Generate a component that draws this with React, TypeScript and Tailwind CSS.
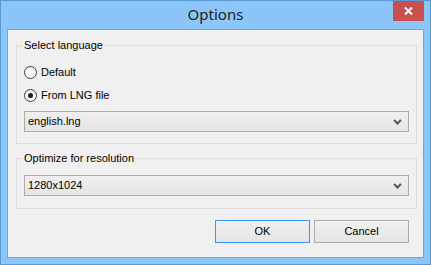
import { useState } from "react";

const body = "font-['Liberation_Sans',Arial,sans-serif] text-[11px] leading-[13px] text-black";

function Chevron() {
  return (
    <svg width="9" height="6" viewBox="0 0 9 6" className="shrink-0">
      <path d="M1 1 L4.5 4.5 L8 1" fill="none" stroke="#555" strokeWidth="2" />
    </svg>
  );
}

function Combo({ value }: { value: string }) {
  return (
    <div className="flex h-[21px] items-center justify-between border border-[#acacac] bg-gradient-to-b from-[#f0f0f0] to-[#e5e5e5] pl-[3px] pr-[6px]">
      <span>{value}</span>
      <Chevron />
    </div>
  );
}

function Radio({
  label,
  checked,
  onSelect,
}: {
  label: string;
  checked: boolean;
  onSelect: () => void;
}) {
  return (
    <button
      type="button"
      onClick={onSelect}
      className="flex h-[16px] items-center gap-[4px] text-left"
    >
      <span className="flex h-[13px] w-[13px] items-center justify-center rounded-full border border-[#3c3c3c] bg-gradient-to-b from-[#f4f4f4] to-white">
        {checked && (
          <span className="h-[5px] w-[5px] rounded-full bg-[#1c1c1c]" />
        )}
      </span>
      <span>{label}</span>
    </button>
  );
}

function Button({ label, focused }: { label: string; focused?: boolean }) {
  return (
    <button
      type="button"
      className={
        focused
          ? "flex h-[23px] w-[95px] items-center justify-center border border-[#3399ff] bg-gradient-to-b from-[#f0f0f0] to-[#e5e5e5]"
          : "flex h-[23px] w-[95px] items-center justify-center border border-[#acacac] bg-gradient-to-b from-[#f0f0f0] to-[#e5e5e5]"
      }
    >
      {label}
    </button>
  );
}

export default function App() {
  const [lang, setLang] = useState<"default" | "lng">("lng");

  return (
    <div className="flex h-[265px] w-[431px] flex-col border border-[#5b9bd5] bg-[#8cc6f8]">
      <div className="grid h-[28px] shrink-0 grid-cols-[1fr_auto_1fr]">
        <div />
        <div className="flex items-center pb-[1px] font-['Noto_Sans',sans-serif] text-[15px] text-[#222]">
          Options
        </div>
        <div className="flex justify-end">
          <div className="mr-[6px] flex h-[20px] w-[31px] items-center justify-center bg-[#c75050]">
            <svg width="9" height="8" viewBox="0 0 9 8">
              <path d="M1 0.5 L8 7.5 M8 0.5 L1 7.5" stroke="white" strokeWidth="2" />
            </svg>
          </div>
        </div>
      </div>

      <div className="mx-[6px] mb-[6px] flex flex-1 flex-col border border-[#6fa6db] bg-[#f0f0f0] pl-[8px] pr-[6px] pt-[9px]">
        <div className={body}>
          <fieldset className="border border-[#dcdcdc] px-[7px] pb-[11px] pt-[12px]">
            <legend className="-ml-[1px] px-[1px]">Select language</legend>
            <div className="flex flex-col gap-[7px]">
              <Radio
                label="Default"
                checked={lang === "default"}
                onSelect={() => setLang("default")}
              />
              <Radio
                label="From LNG file"
                checked={lang === "lng"}
                onSelect={() => setLang("lng")}
              />
            </div>
            <div className="mt-[8px]">
              <Combo value="english.lng" />
            </div>
          </fieldset>

          <fieldset className="mt-[8px] border border-[#dcdcdc] px-[7px] pb-[12px] pt-[10px]">
            <legend className="-ml-[1px] px-[1px]">Optimize for resolution</legend>
            <Combo value="1280x1024" />
          </fieldset>

          <div className="mr-[8px] mt-[11px] flex justify-end gap-[4px]">
            <Button label="OK" focused />
            <Button label="Cancel" />
          </div>
        </div>
      </div>
    </div>
  );
}
